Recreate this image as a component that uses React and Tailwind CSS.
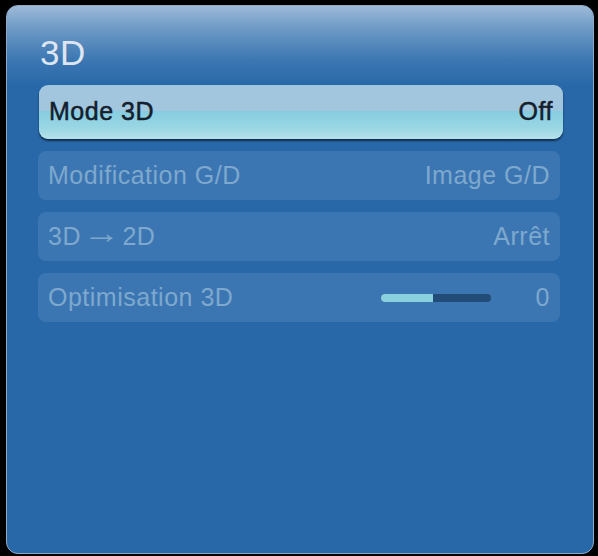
export default function App() {
  const rows = [
    { label: "Modification G/D", value: "Image G/D" },
    { label: "3D → 2D", value: "Arrêt" },
    { label: "Optimisation 3D", value: "0", slider: 0.47 },
  ];

  return (
    <div className="w-[598px] h-[556px] bg-black pt-[5px] pl-[6px] font-['Liberation_Sans',Arial,sans-serif]">
      <div className="w-[588px] h-[549px] rounded-[12px] border border-[#8fa8c4] bg-[#2868a8] bg-[linear-gradient(to_bottom,#9dbad8_0px,#6e9ac6_22px,#3b76b2_55px,#2868a8_80px,#2868a8_100%)] flex flex-col px-[31px]">
        <h1 className="text-[35px] leading-none text-[#dde6f0] mt-[29px] pl-[2px] tracking-[0.5px]">3D</h1>

        <div className="mt-[15px] h-[54px] ml-[1px] w-[524px] rounded-[9px] overflow-hidden relative shadow-[0_2px_2px_rgba(10,30,55,0.8)]">
          <div className="absolute inset-0 flex flex-col">
            <div className="h-[26px] bg-[#a3c6df]" />
            <div className="flex-1 bg-[linear-gradient(to_bottom,#86cde0,#9ad6e4_60%,#b6e2ea)]" />
          </div>
          <div className="relative h-full flex items-center justify-between px-[10px] text-[25px] tracking-[0.5px] text-[#14202c] [-webkit-text-stroke:0.5px_#14202c]">
            <span>Mode 3D</span>
            <span>Off</span>
          </div>
        </div>

        <div className="mt-[12px] flex flex-col gap-[12px]">
          {rows.map((r) => (
            <div
              key={r.label}
              className="h-[49px] w-[522px] rounded-[8px] bg-[#3b76b3] flex items-center justify-between px-[10px] text-[25px] tracking-[0.5px] text-[#7ea8cd]"
            >
              {r.label.includes("→") ? (
                <span className="flex items-center">
                  3D
                  <span className="inline-block scale-x-[1.5] scale-y-[1.2] -translate-y-[4px] mx-[8px]">→</span>
                  2D
                </span>
              ) : (
                <span>{r.label}</span>
              )}
              {r.slider !== undefined ? (
                <div className="flex items-center">
                  <div className="w-[110px] h-[8px] rounded-full bg-[#234b78] overflow-hidden flex">
                    <div className="h-full bg-[#8ad0df]" style={{ width: `${r.slider * 100}%` }} />
                  </div>
                  <span className="w-[59px] text-right">{r.value}</span>
                </div>
              ) : (
                <span>{r.value}</span>
              )}
            </div>
          ))}
        </div>
      </div>
    </div>
  );
}
